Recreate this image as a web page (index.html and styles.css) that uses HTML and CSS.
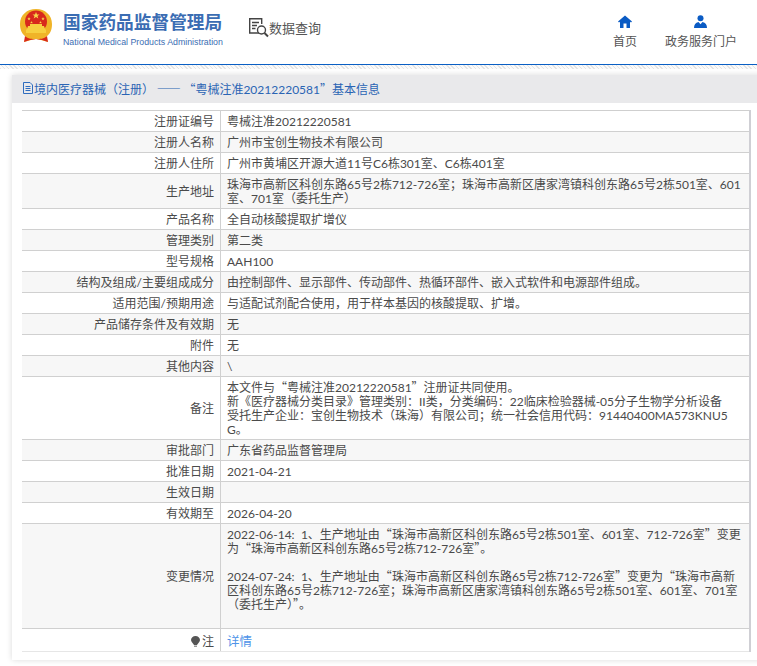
FILE: index.html
```html
<!DOCTYPE html>
<html lang="zh-CN">
<head>
<meta charset="utf-8">
<title>基本信息</title>
<link rel="stylesheet" href="styles.css">
</head>
<body>
<header class="top">
  <div class="brand">
    <svg class="emblem" width="32" height="36" viewBox="0 0 32 36">
      <path d="M16 0C7 0 0 6 0 15c0 6 2 10 6 13l-2 5 7-2 5-1 5 1 7 2-2-5c4-3 6-7 6-13C32 6 25 0 16 0z" fill="#f0b428"/>
      <circle cx="16" cy="12.5" r="11" fill="#d8291c"/>
      <path d="M16 3l1 2.4h2.5l-2 1.6.8 2.5-2.3-1.5-2.3 1.5.8-2.5-2-1.6H15z" fill="#f7d64a"/>
      <path d="M9 8l.5 1.2h1.2l-1 .8.4 1.2L9 10.5 7.900 11.200l.4-1.200-1-.8h1.200zM23 8l.5 1.200h1.200l-1 .8.4 1.200-1.100-.7-1.100.7.4-1.200-1-.8h1.200zM11.500 12l.4 1h1l-.8.6.3 1-.9-.6-.9.6.3-1-.8-.6h1zM20.500 12l.4 1h1l-.8.6.3 1-.9-.6-.9.6.3-1-.8-.6h1z" fill="#f7d64a"/>
      <path d="M7 20l1-3h16l1 3 1 1v3H6v-3z" fill="#f7d040"/>
      <rect x="10" y="15" width="12" height="2" fill="#f7d040"/>
      <path d="M5 27c3 3 7 3 11 3s8 0 11-3l1 6-6-2-6-1-6 1-6 2z" fill="#d8291c"/>
    </svg>
    <div class="brand-text">
      <div class="brand-cn">国家药品监督管理局</div>
      <div class="brand-en">National Medical Products Administration</div>
    </div>
  </div>
  <div class="query">
    <svg width="21" height="21" viewBox="0 0 21 21" fill="none" stroke="#444" stroke-width="1.400">
      <path d="M11 16H1.700V1.700h12V7"/>
      <path d="M4 5.500h7M4 8.500h5M4 11.500h3.500"/>
      <circle cx="13.500" cy="13" r="4"/>
      <path d="M16.500 16l3.500 3.500" stroke-width="2"/>
    </svg>
    <span>数据查询</span>
  </div>
  <nav class="nav">
    <a class="nav-item nav-home">
      <svg width="14" height="13" viewBox="0 0 14 13"><path d="M7 .5L0 6.500l1 1 1-.8V13h3.500V8.500h3V13H12V6.700l1 .8 1-1z" fill="#0a5bc4"/></svg>
      <span>首页</span>
    </a>
    <a class="nav-item nav-portal">
      <svg width="13" height="13" viewBox="0 0 13 13"><circle cx="6.500" cy="3.200" r="3" fill="#0a5bc4"/><path d="M0 13c0-3.500 1.500-5.500 4.500-6l2 2.200 2-2.200c3 .5 4.500 2.500 4.500 6z" fill="#0a5bc4"/></svg>
      <span>政务服务门户</span>
    </a>
  </nav>
</header>
<div class="strip"></div>
<main class="panel">
  <h1 class="panel-title">
    <svg width="10" height="12" viewBox="0 0 10 12" fill="none" stroke="#2f6dbf"><path d="M.5.500h6.500l2.500 2.500v8.500H.5zM2.500 4.500h5M2.500 6.500h5M2.500 8.500h5"/></svg>
    <span>境内医疗器械（注册）<span class="q"> —— “</span>粤械注准20212220581<span class="q">”</span>基本信息</span>
  </h1>
  <div class="table-wrap">
    <table class="info">
      <tbody>
        <tr><th>注册证编号</th><td>粤械注准20212220581</td></tr>
        <tr><th>注册人名称</th><td>广州市宝创生物技术有限公司</td></tr>
        <tr><th>注册人住所</th><td>广州市黄埔区开源大道11号C6栋301室、C6栋401室</td></tr>
        <tr><th>生产地址</th><td>珠海市高新区科创东路65号2栋712-726室；珠海市高新区唐家湾镇科创东路65号2栋501室、601室、701室（委托生产）</td></tr>
        <tr><th>产品名称</th><td>全自动核酸提取扩增仪</td></tr>
        <tr><th>管理类别</th><td>第二类</td></tr>
        <tr><th>型号规格</th><td>AAH100</td></tr>
        <tr><th>结构及组成/主要组成成分</th><td>由控制部件、显示部件、传动部件、热循环部件、嵌入式软件和电源部件组成。</td></tr>
        <tr><th>适用范围/预期用途</th><td>与适配试剂配合使用，用于样本基因的核酸提取、扩增。</td></tr>
        <tr><th>产品储存条件及有效期</th><td>无</td></tr>
        <tr><th>附件</th><td>无</td></tr>
        <tr><th>其他内容</th><td>\</td></tr>
        <tr><th>备注</th><td>本文件与<span class="q">“</span>粤械注准20212220581<span class="q">”</span>注册证共同使用。<br>新《医疗器械分类目录》管理类别：II类，分类编码：22临床检验器械-05分子生物学分析设备<br>受托生产企业：宝创生物技术（珠海）有限公司；统一社会信用代码：91440400MA573KNU5G。</td></tr>
        <tr><th>审批部门</th><td>广东省药品监督管理局</td></tr>
        <tr><th>批准日期</th><td>2021-04-21</td></tr>
        <tr><th>生效日期</th><td></td></tr>
        <tr><th>有效期至</th><td>2026-04-20</td></tr>
        <tr><th>变更情况</th><td>2022-06-14<span class="sep">: </span>1、生产地址由<span class="q">“</span>珠海市高新区科创东路65号2栋501室、601室、712-726室<span class="q">”</span>变更为<span class="q">“</span>珠海市高新区科创东路65号2栋712-726室<span class="q">”</span>。<br><br>2024-07-24<span class="sep">: </span>1、生产地址由<span class="q">“</span>珠海市高新区科创东路65号2栋712-726室<span class="q">”</span>变更为<span class="q">“</span>珠海市高新区科创东路65号2栋712-726室；珠海市高新区唐家湾镇科创东路65号2栋501室、601室、701室（委托生产）<span class="q">”</span>。<br><br></td></tr>
        <tr class="note-row"><th><svg class="bulb" width="9" height="11" viewBox="0 0 9 11"><path d="M4.500 0C2 0 0 1.800 0 4c0 2 2 3 3 5h3c1-2 3-3 3-5 0-2.200-2-4-4.500-4z" fill="#555"/><rect x="3" y="9.500" width="3" height="1.500" fill="#999"/></svg>注</th><td><a class="detail">详情</a></td></tr>
      </tbody>
    </table>
  </div>
</main>
</body>
</html>
```
FILE: styles.css
```css
html, body {
  margin: 0;
  padding: 0;
  height: 666px;
  overflow: hidden;
  background: #fff;
  font-family: Lato, "Noto Sans CJK SC", sans-serif;
  font-size: 12px;
  color: #4a4a4a;
}
.q {
  font-family: "Noto Sans CJK SC", sans-serif;
  line-height: 0;
}
.sep {
  letter-spacing: 1.600px;
}
.top {
  display: flex;
  align-items: flex-start;
  height: 64px;
  border-bottom: 1px solid #0a5fc4;
  box-sizing: content-box;
}
.brand {
  display: flex;
  width: 228px;
  flex: none;
  padding: 9px 0 0 20px;
}
.emblem {
  flex: none;
}
.brand-text {
  margin-left: 11px;
}
.brand-cn {
  font-size: 17.700px;
  line-height: 22px;
  font-weight: 700;
  color: #3b6db3;
  white-space: nowrap;
  margin-top: 3px;
}
.brand-en {
  font-family: "Liberation Sans", sans-serif;
  font-size: 8.800px;
  line-height: 12px;
  color: #3b6db3;
  white-space: nowrap;
  margin-top: 2px;
}
.query {
  display: flex;
  align-items: center;
  margin-top: 17px;
  color: #555;
  font-size: 13px;
  line-height: 20px;
}
.nav {
  display: flex;
  margin-left: auto;
  padding: 15px 20px 0 0;
}
.nav-item {
  display: flex;
  flex-direction: column;
  align-items: center;
  gap: 6px;
  color: #555;
  line-height: 16px;
}
.nav-portal {
  margin-left: 28px;
}
.strip {
  height: 4px;
  background: repeating-linear-gradient(45deg, #e4e4e4 0 1px, #fafafa 1px 3px);
}
.panel {
  margin: 6px -20px 0 12px;
  background: #fff;
  box-shadow: 0 0 6px rgba(0, 0, 0, 0.15);
  padding-bottom: 8px;
}
.panel-title {
  display: flex;
  align-items: center;
  gap: 1px;
  margin: 0;
  height: 28px;
  box-sizing: border-box;
  padding: 0 0 2px 11px;
  background: #e9e9eb;
  font-size: 12px;
  font-weight: 400;
  color: #2a64b4;
  white-space: nowrap;
}
.table-wrap {
  padding: 7px 0 0 10px;
}
.info {
  width: 729px;
  table-layout: fixed;
  border-collapse: collapse;
  border-top: 1px solid #cfcfcf;
  border-right: 2px solid #cfcfd4;
}
.info th, .info td {
  padding: 4px 6px 2px;
  line-height: 14px;
  font-size: 12px;
  font-weight: 400;
  border-bottom: 1px solid #d0d0d0;
  word-break: break-all;
  vertical-align: middle;
}
.info th {
  width: 186px;
  text-align: right;
  border-right: 1px solid #d0d0d0;
}
.info tr:nth-child(even) {
  background: #f7f7f7;
}
.note-row th, .note-row td {
  padding: 6px 6px 2px;
  border-bottom-color: #e6e6e6;
}
.bulb {
  vertical-align: -1px;
  margin-right: 2px;
}
.detail {
  color: #4f94e8;
  font-size: 12.500px;
}
```
